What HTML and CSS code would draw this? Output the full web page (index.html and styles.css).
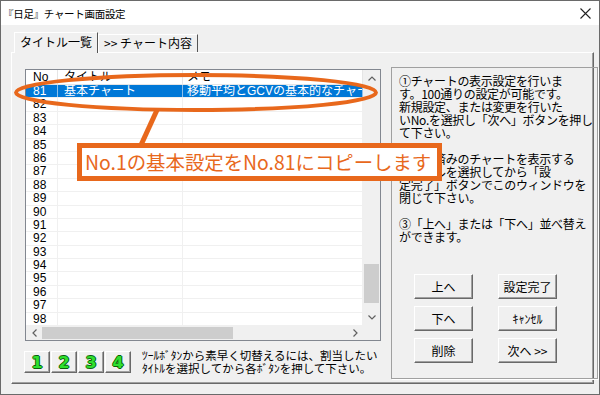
FILE: index.html
```html
<!DOCTYPE html>
<html lang="ja">
<head>
  <meta charset="UTF-8">
  <title>『日足』チャート画面設定</title>
  <link rel="stylesheet" href="styles.css">
</head>
<body>
  <div class="window">
    <div class="titlebar">
      <span class="title">『日足』チャート画面設定</span>
      <svg class="close" viewBox="0 0 11 11"><path d="M0.5 0.5 L10.5 10.5 M10.5 0.5 L0.5 10.5" stroke="#222" stroke-width="1.1" fill="none"/></svg>
    </div>

    <div class="main">
      <div class="tabs">
        <div class="tab active">タイトル一覧</div>
        <div class="tab">&gt;&gt; チャート内容</div>
      </div>

      <div class="panel">
        <div class="left">
          <div class="list">
            <div class="list-top">
              <div class="grid">
                <div class="row head"><span class="c-no">No</span><span class="c-title">タイトル</span><span class="c-memo">メモ</span></div>
                <div class="row selected"><span class="c-no">81</span><span class="c-title">基本チャート</span><span class="c-memo">移動平均とGCVの基本的なチャー</span></div>
                <div class="row"><span class="c-no">82</span><span class="c-title"></span><span class="c-memo"></span></div>
                <div class="row"><span class="c-no">83</span><span class="c-title"></span><span class="c-memo"></span></div>
                <div class="row"><span class="c-no">84</span><span class="c-title"></span><span class="c-memo"></span></div>
                <div class="row"><span class="c-no">85</span><span class="c-title"></span><span class="c-memo"></span></div>
                <div class="row"><span class="c-no">86</span><span class="c-title"></span><span class="c-memo"></span></div>
                <div class="row"><span class="c-no">87</span><span class="c-title"></span><span class="c-memo"></span></div>
                <div class="row"><span class="c-no">88</span><span class="c-title"></span><span class="c-memo"></span></div>
                <div class="row"><span class="c-no">89</span><span class="c-title"></span><span class="c-memo"></span></div>
                <div class="row"><span class="c-no">90</span><span class="c-title"></span><span class="c-memo"></span></div>
                <div class="row"><span class="c-no">91</span><span class="c-title"></span><span class="c-memo"></span></div>
                <div class="row"><span class="c-no">92</span><span class="c-title"></span><span class="c-memo"></span></div>
                <div class="row"><span class="c-no">93</span><span class="c-title"></span><span class="c-memo"></span></div>
                <div class="row"><span class="c-no">94</span><span class="c-title"></span><span class="c-memo"></span></div>
                <div class="row"><span class="c-no">95</span><span class="c-title"></span><span class="c-memo"></span></div>
                <div class="row"><span class="c-no">96</span><span class="c-title"></span><span class="c-memo"></span></div>
                <div class="row"><span class="c-no">97</span><span class="c-title"></span><span class="c-memo"></span></div>
                <div class="row"><span class="c-no">98</span><span class="c-title"></span><span class="c-memo"></span></div>
              </div>
              <div class="vscroll">
                <div class="arrow"><svg viewBox="0 0 8 5"><path d="M0.5 4.5 L4 1 L7.5 4.5" stroke="#606060" stroke-width="1.2" fill="none"/></svg></div>
                <div class="vtrack"><div class="vthumb" style="margin-top: 177px"></div></div>
                <div class="arrow"><svg viewBox="0 0 8 5"><path d="M0.5 0.5 L4 4 L7.5 0.5" stroke="#606060" stroke-width="1.2" fill="none"/></svg></div>
              </div>
            </div>
            <div class="hscroll">
              <div class="harrow"><svg viewBox="0 0 5 8"><path d="M4.5 0.5 L1 4 L4.5 7.5" stroke="#606060" stroke-width="1.2" fill="none"/></svg></div>
              <div class="htrack"><div class="hthumb" style="width: 191px"></div></div>
              <div class="harrow"><svg viewBox="0 0 5 8"><path d="M0.5 0.5 L4 4 L0.5 7.5" stroke="#606060" stroke-width="1.2" fill="none"/></svg></div>
              <div class="corner"></div>
            </div>
          </div>

          <div class="toolbar">
            <div class="numbtns">
              <div class="numbtn">1</div>
              <div class="numbtn">2</div>
              <div class="numbtn">3</div>
              <div class="numbtn">4</div>
            </div>
            <p class="hint">ﾂｰﾙﾎﾞﾀﾝから素早く切替えるには、割当したい<br>ﾀｲﾄﾙを選択してから各ﾎﾞﾀﾝを押して下さい。</p>
          </div>
        </div>

        <div class="side">
          <div class="help">
            <p>①チャートの表示設定を行いま<br>す。100通りの設定が可能です。<br>新規設定、または変更を行いた<br>いNo.を選択し「次へ」ボタンを押し<br>て下さい。</p>
            <p>②登録済みのチャートを表示する<br>タイトルを選択してから「設<br>定完了」ボタンでこのウィンドウを<br>閉じて下さい。</p>
            <p>③「上へ」または「下へ」並べ替え<br>ができます。</p>
          </div>
          <div class="btns">
            <div class="btn">上へ</div>
            <div class="btn">設定完了</div>
            <div class="btn">下へ</div>
            <div class="btn">ｷｬﾝｾﾙ</div>
            <div class="btn">削除</div>
            <div class="btn">次へ &gt;&gt;</div>
          </div>
        </div>
      </div>
    </div>
  </div>

  <!-- annotation drawn over the dialog -->
  <svg class="mark" width="600" height="395" viewBox="0 0 600 395">
    <ellipse cx="196" cy="92.5" rx="180" ry="17.5" fill="none" stroke="#e8681c" stroke-width="4"/>
    <line x1="157" y1="110" x2="141" y2="145" stroke="#e8681c" stroke-width="5"/>
  </svg>
  <div class="callout">No.1の基本設定をNo.81にコピーします</div>
</body>
</html>
```

FILE: styles.css
```css
* {
  box-sizing: border-box;
}

body {
  margin: 0;
  position: relative;
  width: 600px;
  height: 395px;
  font-family: "Noto Sans CJK JP", sans-serif;
  font-size: 12px;
  color: #000;
  background: #fff;
}

.window {
  width: 600px;
  height: 395px;
  border: 1px solid #6a6a6a;
  background: #f0f0f0;
  display: flex;
  flex-direction: column;
  overflow: hidden;
}

/* Title bar */
.titlebar {
  height: 24px;
  flex-shrink: 0;
  background: #fff;
  display: flex;
  align-items: center;
  justify-content: space-between;
  padding: 0 8px 0 2px;
}

.title {
  font-size: 10.5px;
  letter-spacing: -0.3px;
}

.close {
  width: 11px;
  height: 11px;
}

.main {
  flex: 1;
  display: flex;
  flex-direction: column;
  padding: 7px 5px 10px 10px;
}

/* Tabs */
.tabs {
  display: flex;
  align-items: flex-end;
  height: 20px;
  padding-left: 3px;
}

.tab {
  height: 18px;
  line-height: 16px;
  padding: 0 5px;
  border-left: 1px solid #fff;
  border-top: 1px solid #fff;
  border-right: 1px solid #555;
  white-space: nowrap;
}

.tab.active {
  height: 21px;
  margin-bottom: -1px;
  line-height: 18px;
  background: #f0f0f0;
  position: relative;
  z-index: 1;
}

.panel {
  flex: 1;
  display: flex;
  gap: 10px;
  padding: 14px 4px 4px 13px;
  border: 1px solid;
  border-color: #fff #696969 #696969 #fff;
  box-shadow: inset -1px -1px 0 #a0a0a0;
}

.left {
  width: 356px;
  display: flex;
  flex-direction: column;
}

/* List view */
.list {
  margin-top: 2px;
  height: 272px;
  border: 1px solid #828790;
  background: #fff;
  display: flex;
  flex-direction: column;
  font-family: "Liberation Sans", "Noto Sans CJK JP", sans-serif;
}

.list-top {
  flex: 1;
  display: flex;
}

.grid {
  flex: 1;
  overflow: hidden;
}

.row {
  display: flex;
  height: 13.4px;
  line-height: 13px;
  border-bottom: 1px solid #f0f0f0;
  white-space: nowrap;
}

.row span {
  overflow: hidden;
  border-right: 1px solid #f0f0f0;
}

.row.head {
  height: 15px;
  line-height: 15px;
  border-bottom: 1px solid #e5e5e5;
}

.row.head span {
  border-right-color: #e5e5e5;
}

.row.selected {
  background: #0078d7;
  color: #fff;
}

.row.selected span {
  border-right-color: #8fc0ea;
}

.c-no {
  width: 32px;
  padding-left: 7px;
}

.c-title {
  width: 125px;
  padding-left: 6px;
}

.c-memo {
  flex: 1;
  padding-left: 4px;
}

.vscroll {
  width: 17px;
  background: #f0f0f0;
  display: flex;
  flex-direction: column;
}

.arrow {
  height: 17px;
  display: flex;
  align-items: center;
  justify-content: center;
}

.arrow svg {
  width: 8px;
  height: 5px;
}

.vtrack {
  flex: 1;
}

.vthumb {
  height: 39px;
  margin: 0 1px;
  background: #cdcdcd;
}

.hscroll {
  height: 14px;
  display: flex;
  background: #f0f0f0;
}

.harrow {
  width: 16px;
  display: flex;
  align-items: center;
  justify-content: center;
}

.harrow svg {
  width: 5px;
  height: 8px;
}

.htrack {
  flex: 1;
  padding: 1px 0;
}

.hthumb {
  height: 100%;
  background: #cdcdcd;
}

.corner {
  width: 17px;
}

/* Tool buttons */
.toolbar {
  display: flex;
  align-items: center;
  gap: 11px;
  margin-top: 8px;
  margin-left: -1px;
}

.numbtns {
  display: flex;
  gap: 1px;
}

.numbtn {
  width: 26px;
  height: 22px;
  border: 1px solid;
  border-color: #fff #696969 #696969 #fff;
  box-shadow: inset -1px -1px 0 #a0a0a0;
  background: #f0f0f0;
  display: flex;
  align-items: center;
  justify-content: center;
  font-family: "DejaVu Sans", sans-serif;
  font-weight: bold;
  font-size: 16px;
  color: #2fe02f;
  text-shadow: 1px 0 0 #0b5e0b, -1px 0 0 #0b5e0b, 0 1px 0 #0b5e0b, 0 -1px 0 #0b5e0b;
}

.hint {
  margin: 0;
  font-size: 11.5px;
  line-height: 13px;
  white-space: nowrap;
}

/* Right side */
.side {
  flex: 1;
  border: 1px solid #a0a0a0;
  box-shadow: 1px 1px 0 #fff;
  display: flex;
  flex-direction: column;
  justify-content: space-between;
  padding: 6px 4px 15px 7px;
}

.help p {
  margin: 0 0 13px;
  line-height: 13px;
  white-space: nowrap;
  letter-spacing: -0.3px;
}

.btns {
  display: grid;
  grid-template-columns: 59px 59px;
  column-gap: 25px;
  row-gap: 7px;
  padding-left: 15px;
}

.btn {
  height: 25px;
  border: 1px solid;
  border-color: #fff #696969 #696969 #fff;
  box-shadow: inset -1px -1px 0 #a0a0a0;
  background: #f0f0f0;
  display: flex;
  align-items: center;
  justify-content: center;
  white-space: nowrap;
}

/* Annotation */
.mark {
  position: absolute;
  left: 0;
  top: 0;
  pointer-events: none;
}

.callout {
  position: absolute;
  left: 77px;
  top: 143px;
  width: 365px;
  height: 38px;
  border: 5px solid #e8681c;
  background: #fff;
  color: #e8681c;
  font-family: "Noto Sans CJK JP", sans-serif;
  font-size: 19.4px;
  line-height: 27px;
  padding-left: 3px;
  white-space: nowrap;
}
```
